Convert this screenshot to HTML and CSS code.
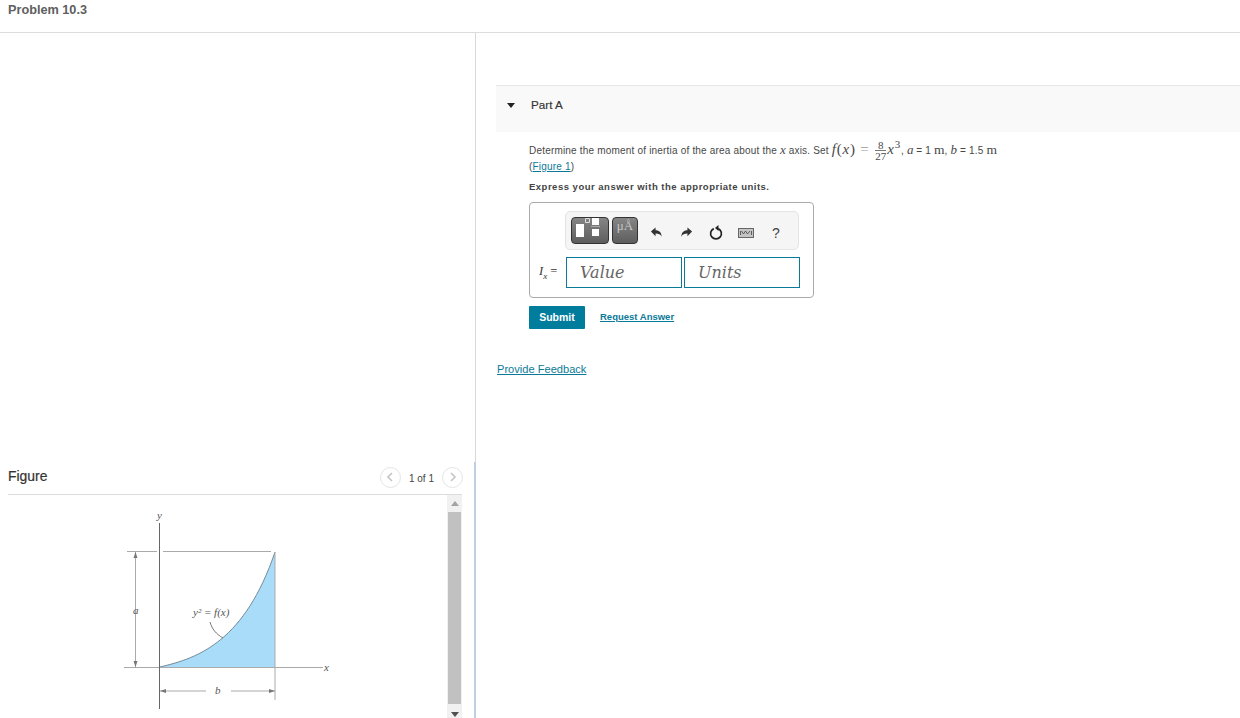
FILE: index.html
```html
<!DOCTYPE html>
<html lang="en">
<head>
<meta charset="utf-8">
<title>Problem 10.3</title>
<link rel="stylesheet" href="styles.css">
</head>
<body>
<header class="page-head"><h1 class="page-title">Problem 10.3</h1></header>
<main class="columns">
  <section class="left">
    <div class="figure-panel">
      <div class="figure-head">
        <span class="figure-title">Figure</span>
        <div class="pager">
          <span class="pager-btn"><svg width="8" height="10" viewBox="0 0 8 10"><path d="M6 1 2 5l4 4" fill="none" stroke="#c4c4c4" stroke-width="1.6"/></svg></span>
          <span class="pager-text">1 of 1</span>
          <span class="pager-btn"><svg width="8" height="10" viewBox="0 0 8 10"><path d="M2 1l4 4-4 4" fill="none" stroke="#c4c4c4" stroke-width="1.6"/></svg></span>
        </div>
      </div>
      <div class="figure-body">
        <svg class="diagram" width="439" height="223" viewBox="8 495 439 223">
          <path d="M159.500 667C200 658 245 640 275 552V667Z" fill="#a8dcf8"/>
          <path d="M159.500 667C200 658 245 640 275 552" fill="none" stroke="#5f7480" stroke-width=".8"/>
          <g fill="none" stroke="#aaa" stroke-width="1">
            <path d="M127 551.500h30M163 551.500h108M124 667.500h199M275 552v148M135.500 552v115M160 691h46M231 691h44"/>
            <path d="M210 622c2 7 6 12 13 16" stroke="#777"/>
          </g>
          <path d="M159.500 523v186" stroke="#666" stroke-width="1" fill="none"/>
          <path d="M135.500 552l-2 6h4zM135.500 667l-2-6h4zM160 691l6-2v4zM275 691l-6-2v4z" fill="#777"/>
          <g class="diagram-text">
            <text x="157" y="519">y</text>
            <text x="133" y="614">a</text>
            <text x="215" y="694">b</text>
            <text x="324" y="671">x</text>
            <text x="193" y="616">y² = f(x)</text>
          </g>
        </svg>
        <div class="scrollbar">
          <span class="arrow-up"></span>
          <span class="thumb"></span>
          <span class="arrow-down"></span>
        </div>
      </div>
    </div>
  </section>
  <section class="right">
    <div class="part-head">
      <span class="caret"></span>
      <span class="part-title">Part A</span>
    </div>
    <div class="part-body">
      <p class="question">Determine the moment of inertia of the area about the <i class="mvar">x</i> axis. Set <span class="math"><i>f</i>(<i>x</i>) <span class="eq">=</span> <span class="frac"><span class="num">8</span><span class="den">27</span></span><i>x</i><sup>3</sup></span>, <i class="mvar">a</i> = 1 <span class="mvar-r">m</span>, <i class="mvar">b</i> = 1.5 <span class="mvar-r">m</span></p>
      <p class="figure-ref">(<a href="#" class="link">Figure 1</a>)</p>
      <p class="instruction">Express your answer with the appropriate units.</p>
      <div class="answer-box">
        <div class="toolbar">
          <span class="tool-btn tool-template">
            <svg width="36" height="25" viewBox="0 0 36 25"><path fill="#fff" d="M4 6h8v13H4zM20 0h7v7h-7zM20 11h7v7h-7z"/><path fill="none" stroke="#ddd" d="M13.500 .5h4v4h-4z"/><path stroke="#aaa" d="M19 8.500h9"/></svg>
          </span>
          <span class="tool-btn tool-units">μÅ</span>
          <span class="tool-icons">
            <svg width="13" height="13" viewBox="0 0 14 14"><path fill="#333" d="M1 6l5-4.500V4.500c4 0 6.500 2.500 6.500 7-1.300-2.500-3-3.300-6.500-3.300v2.800z"/></svg>
            <svg width="13" height="13" viewBox="0 0 14 14"><path fill="#333" d="M13 6L8 1.500V4.500c-4 0-6.500 2.500-6.500 7 1.300-2.500 3-3.300 6.500-3.300v2.800z"/></svg>
            <svg width="16" height="16" viewBox="0 0 16 16"><path fill="none" stroke="#222" stroke-width="1.700" d="M5.800 3.600a5.400 5.400 0 1 0 4.400 0"/><path fill="#222" d="M7 0v6L3.500 3z" transform="translate(3.500)"/></svg>
            <svg width="16" height="10" viewBox="0 0 16 10"><rect x=".5" y=".5" width="15" height="9" fill="#c4c4c4" stroke="#666"/><path fill="none" stroke="#444" stroke-width=".8" d="M2.500 3v4M13.500 3v4M3.500 3l2 3 2-3 2 3 2.500-3"/></svg>
            <span class="help">?</span>
          </span>
        </div>
        <div class="answer-row">
          <span class="answer-label"><i>I<sub>x</sub></i> =</span>
          <span class="field">Value</span>
          <span class="field">Units</span>
        </div>
      </div>
      <div class="actions">
        <button class="submit" type="button">Submit</button>
        <a href="#" class="link request">Request Answer</a>
      </div>
    </div>
    <a href="#" class="link feedback">Provide Feedback</a>
  </section>
</main>
</body>
</html>
```
FILE: styles.css
```css
* { box-sizing: border-box; }
html, body { margin: 0; height: 100%; overflow: hidden; }
body { background: #fff; color: #333; font-family: "Liberation Sans", Arial, sans-serif; }
p { margin: 0; }

.page-head { height: 33px; border-bottom: 1px solid #dcdcdc; padding: 2px 8px 0; }
.page-title { margin: 0; font-size: 12.700px; line-height: 16px; font-weight: 700; color: #606060; }

.columns { display: grid; grid-template-columns: 476px 1fr; height: 685px; }
.left { display: flex; flex-direction: column; justify-content: flex-end; border-right: 1px solid #d8d8d8; }
.figure-panel { height: 256px; display: flex; flex-direction: column; margin-right: -1px; border-right: 2px solid #bcd0e2; padding-left: 8px; padding-right: 12px; }
.figure-head { height: 33px; flex: none; border-bottom: 1px solid #dcdcdc; display: flex; justify-content: space-between; align-items: center; padding-bottom: 5px; }
.figure-title { font-size: 13.900px; color: #333; -webkit-text-stroke: .2px #333; }
.pager { display: flex; align-items: center; gap: 8px; margin-right: -1px; padding-top: 3px; }
.pager-btn { width: 21px; height: 21px; border: 1px solid #e4e4e4; border-radius: 50%; display: flex; align-items: center; justify-content: center; }
.pager-text { font-size: 10px; color: #444; padding-top: 2px; }
.figure-body { flex: 1; display: flex; min-height: 0; }
.diagram { display: block; flex: none; }
.diagram-text text { font-family: "Liberation Serif", serif; font-style: italic; font-size: 11px; fill: #555; }
.scrollbar { width: 15px; background: #f1f1f1; display: flex; flex-direction: column; align-items: center; }
.arrow-up { margin-top: 6px; border: 4px solid transparent; border-top: 0; border-bottom: 5px solid #a3a3a3; }
.thumb { width: 13px; height: 192px; margin-top: 6px; background: #c1c1c1; flex: none; }
.arrow-down { margin-top: 8px; border: 4px solid transparent; border-bottom: 0; border-top: 5px solid #505050; }

.right { padding: 52px 0 0 20px; min-width: 0; }
.part-head { height: 47px; background: #f9f9f9; border-top: 1px solid #e6e6e6; display: flex; align-items: center; padding: 0 0 9px 11px; }
.caret { border: 4.500px solid transparent; border-bottom: 0; border-top: 5px solid #222; margin-top: 2px; }
.part-title { margin-left: 16px; font-size: 11.700px; color: #333; -webkit-text-stroke: .15px #333; }
.part-body { padding: 8px 0 0 33px; }
.question { font-size: 10px; letter-spacing: .19px; color: #484848; height: 17px; line-height: 17px; white-space: nowrap; }
.mvar { font-family: "Liberation Serif", serif; font-size: 13px; letter-spacing: 0; }
.mvar-r { font-family: "Liberation Serif", serif; font-size: 13.500px; letter-spacing: 0; }
.math { font-family: "Liberation Serif", serif; font-size: 15px; letter-spacing: .8px; }
.eq { color: #999; }
.frac { display: inline-flex; flex-direction: column; align-items: center; vertical-align: middle; font-size: 11px; line-height: 10px; margin: 0 1px; letter-spacing: 0; }
.num { border-bottom: 1px solid #777; padding: 0 1px; width: 100%; text-align: center; }
.math sup { font-size: 11px; line-height: 0; }
.figure-ref { font-size: 10px; letter-spacing: .19px; line-height: 13px; color: #484848; margin-top: 3px; }
.link { color: #0b7a99; }
.instruction { margin-top: 7px; font-size: 9.500px; letter-spacing: .5px; line-height: 14px; font-weight: 700; color: #444; }
.answer-box { width: 285px; height: 96px; margin-top: 8px; border: 1px solid #aaa; border-radius: 4px; padding: 8px 13px 0 8px; }
.toolbar { width: 234px; height: 39px; margin-left: 27px; background: #f5f5f5; border: 1px solid #e4e4e4; border-radius: 5px; display: flex; align-items: flex-start; padding: 5px 0 0 5px; gap: 3px; }
.tool-btn { height: 27px; border: 1px solid #333; border-radius: 4px; background: linear-gradient(#858585, #5e5e5e); display: flex; align-items: center; justify-content: center; flex: none; }
.tool-template { width: 38px; }
.tool-units { width: 26px; color: #c8c8c8; font-family: "Liberation Serif", serif; font-size: 13px; align-items: flex-start; }
.tool-icons { display: grid; grid-template-columns: 31px 29px 30px 30px 30px; justify-items: center; align-items: center; height: 27px; padding-top: 4px; }
.help { font-size: 14px; color: #444; }
.answer-row { display: flex; align-items: center; gap: 2px; margin-top: 7px; }
.answer-label { width: 26px; padding-left: 1px; font-family: "Liberation Serif", serif; font-size: 12.500px; color: #333; white-space: nowrap; }
.answer-label sub { font-size: 9px; }
.field { width: 116px; height: 31px; border: 1px solid #0b7a99; padding-left: 13px; font-family: "DejaVu Serif", serif; font-style: italic; font-size: 16px; line-height: 29px; color: #666; }
.actions { display: flex; align-items: center; margin-top: 8px; }
.submit { width: 56px; height: 23px; border: 0; padding: 0 0 2px; background: #007c9c; color: #fff; font: 700 10.500px "Liberation Sans", Arial, sans-serif; border-radius: 1px; }
.request { margin-left: 15px; font-size: 9.500px; font-weight: 700; padding-bottom: 2px; }
.feedback { display: block; margin: 33px 0 0 1px; font-size: 11.100px; line-height: 14px; }
```
